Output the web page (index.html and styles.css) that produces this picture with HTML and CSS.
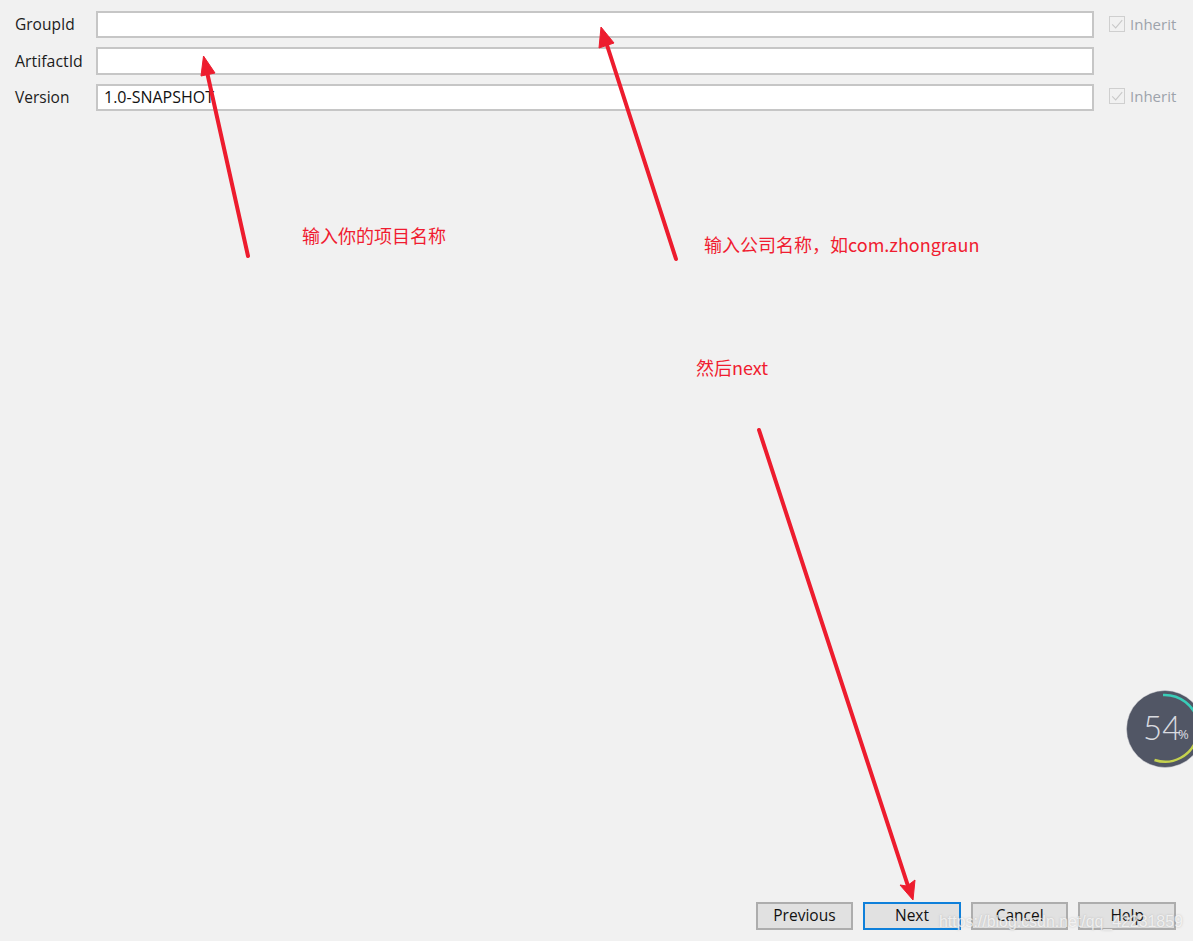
FILE: index.html
```html
<!DOCTYPE html>
<html lang="zh">
<head>
<meta charset="utf-8">
<title>New Project</title>
<link rel="stylesheet" href="styles.css">
</head>
<body>
<main class="dialog">
  <form class="form">
    <label class="label">GroupId</label>
    <div class="field"></div>
    <div class="inherit"><span class="check"><svg viewBox="0 0 16 16" class="tick"><path d="M2.5 8.5 6.5 12.5 14 3.5"/></svg></span>Inherit</div>
    <label class="label label-wide">ArtifactId</label>
    <div class="field"></div>
    <div></div>
    <label class="label">Version</label>
    <div class="field">1.0-SNAPSHOT</div>
    <div class="inherit"><span class="check"><svg viewBox="0 0 16 16" class="tick"><path d="M2.5 8.5 6.5 12.5 14 3.5"/></svg></span>Inherit</div>
  </form>
  <footer class="buttons">
    <button type="button" class="btn">Previous</button>
    <button type="button" class="btn btn-default">Next</button>
    <button type="button" class="btn">Cancel</button>
    <button type="button" class="btn">Help</button>
  </footer>
</main>

<svg class="arrows" width="1193" height="941" viewBox="0 0 1193 941">
  <g class="shaft">
    <path d="M248 256 207 72"/>
    <path d="M676 259 606 42"/>
    <path d="M759 430 908 886"/>
  </g>
  <g class="head">
    <path d="M203.5 56 201 76 215 73Z"/>
    <path d="M601 27 599 48 614 43Z"/>
    <path d="M913 900 900 885 907 886 915 880Z"/>
  </g>
</svg>

<div class="note note-artifact">输入你的项目名称</div>
<div class="note note-group">输入公司名称，如com.zhongraun</div>
<div class="note note-next">然后next</div>

<div class="gauge">
  <svg viewBox="0 0 80 80" width="80" height="80">
    <circle class="gauge-disc" cx="40" cy="40" r="38.5"/>
    <path class="gauge-top" d="M38 6A34 34 0 0 1 73 33"/>
    <path class="gauge-bottom" d="M72 48A33 33 0 0 1 29.5 71"/>
  </svg>
  <span class="gauge-num">54</span><span class="gauge-pct">%</span>
</div>

<div class="watermark">https://blog.csdn.net/qq_42231859</div>
</body>
</html>
```

FILE: styles.css
```css
html, body {
  margin: 0;
  height: 100%;
}
body {
  position: relative;
  width: 1193px;
  height: 941px;
  overflow: hidden;
  background: #f1f1f1;
  font-family: "Open Sans", "Noto Sans", "Noto Sans CJK SC", sans-serif;
  font-size: 15.5px;
  color: #111;
}
.dialog {
  display: flex;
  flex-direction: column;
  justify-content: space-between;
  height: 941px;
  box-sizing: border-box;
  padding: 11px 17px 11px 15px;
}
.form {
  display: grid;
  grid-template-columns: 81px 998px 1fr;
  grid-auto-rows: 27.4px;
  row-gap: 9px;
  align-items: center;
}
.label {
  line-height: 27px;
  color: #1c1c1c;
}
.label-wide {
  line-height: 25px;
  font-size: 15.9px;
}
.field {
  height: 100%;
  box-sizing: border-box;
  background: #fff;
  border: 2px solid #c6c6c6;
  padding-left: 6px;
  font-size: 16px;
  line-height: 23px;
  color: #111;
}
.inherit {
  display: flex;
  align-items: center;
  margin-left: 15px;
  margin-top: -2px;
  font-size: 15px;
  color: #9da3ab;
  white-space: nowrap;
}
.check {
  display: flex;
  width: 16px;
  height: 16px;
  box-sizing: border-box;
  border: 1px solid #cfcfcf;
  margin-right: 5px;
}
.tick {
  width: 14px;
  height: 14px;
  fill: none;
  stroke: #c8c8c8;
  stroke-width: 1.2;
}
.buttons {
  display: flex;
  justify-content: flex-end;
  gap: 10px;
}
.btn {
  width: 97.6px;
  height: 28px;
  box-sizing: border-box;
  padding: 0 0 2px;
  background: #e1e1e1;
  border: 2px solid #adadad;
  font: inherit;
  color: #111;
}
.btn-default {
  border-color: #0f80da;
}
.arrows {
  position: absolute;
  left: 0;
  top: 0;
  pointer-events: none;
}
.shaft path {
  fill: none;
  stroke: #ed1c2e;
  stroke-width: 4;
  stroke-linecap: round;
}
.head path {
  fill: #ed1c2e;
  stroke: #ed1c2e;
  stroke-width: 1;
  stroke-linejoin: round;
}
.note {
  position: absolute;
  color: #f01c30;
  font-size: 18px;
  line-height: 24px;
  font-family: "Noto Sans CJK SC", "Open Sans", sans-serif;
  white-space: nowrap;
}
.note-artifact { left: 302px; top: 223px; }
.note-group { left: 704px; top: 232px; }
.note-next { left: 696px; top: 355px; }
.gauge {
  position: absolute;
  left: 1125px;
  top: 689px;
  width: 80px;
  height: 80px;
  color: #d9dbe0;
}
.gauge-disc {
  fill: #515665;
  stroke: #d9d9dc;
  stroke-width: 0.5;
}
.gauge-top, .gauge-bottom {
  fill: none;
  stroke-width: 2.5;
}
.gauge-top { stroke: #39cdb8; }
.gauge-bottom { stroke: #c5d24e; }
.gauge-num {
  position: absolute;
  left: 18px;
  top: 18px;
  font-family: "Lato", sans-serif;
  font-weight: 300;
  font-size: 33px;
  line-height: 40px;
}
.gauge-pct {
  position: absolute;
  left: 53px;
  top: 37px;
  font-size: 13px;
  line-height: 16px;
}
.watermark {
  position: absolute;
  left: 939px;
  top: 911px;
  font-family: "Liberation Sans", sans-serif;
  font-size: 15.9px;
  line-height: 22px;
  color: rgba(255, 255, 255, 0.72);
  text-shadow: 0 0 2px rgba(150, 150, 150, 0.55);
  white-space: nowrap;
}
```
